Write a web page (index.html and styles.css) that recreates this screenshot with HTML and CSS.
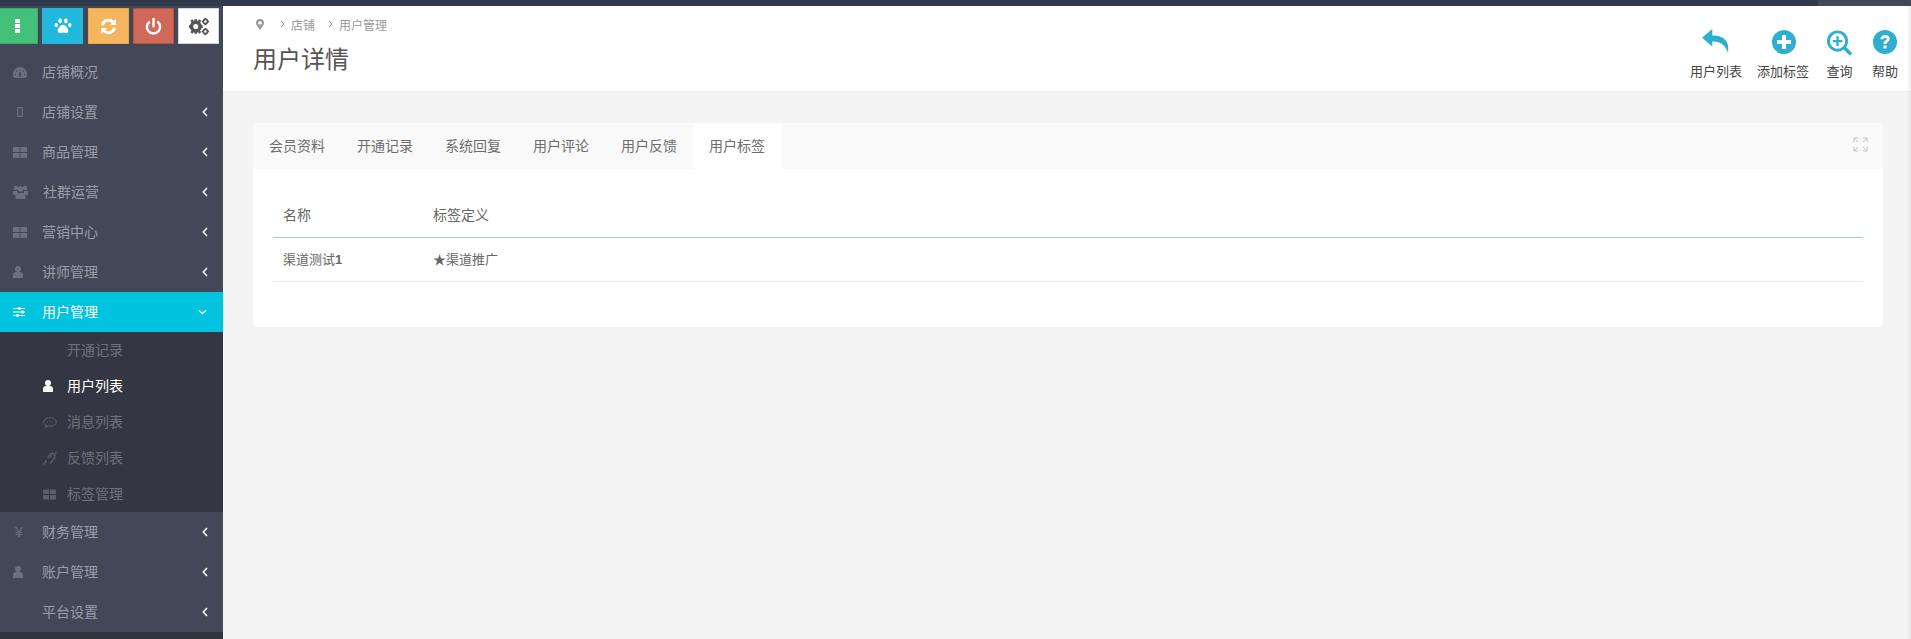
FILE: index.html
```html
<!DOCTYPE html>
<html lang="zh">
<head>
<meta charset="utf-8">
<title>用户详情</title>
<link rel="stylesheet" href="styles.css">
</head>
<body>
<div class="topbar"><div class="topbar-end"></div></div>
<div class="layout">
  <aside class="sidebar">
    <div class="shortcuts">
      <a class="sc sc-green"><svg viewBox="0 0 5 14" width="5" height="14" fill="#fff"><rect width="5" height="4"/><rect y="5" width="5" height="4"/><rect y="10" width="5" height="4"/></svg></a>
      <a class="sc sc-blue"><svg viewBox="0 0 20 18" width="18" height="16" fill="#fff"><ellipse cx="6.800" cy="3.200" rx="2" ry="2.900"/><ellipse cx="13.200" cy="3.200" rx="2" ry="2.900"/><ellipse cx="2.400" cy="8" rx="1.900" ry="2.500"/><ellipse cx="17.600" cy="8" rx="1.900" ry="2.500"/><path d="M10 7.500c3 0 6 4.200 6 7.200 0 2.300-2.500 2.500-3.500 2.200-1-.3-1.700-.6-2.500-.6s-1.500.3-2.500.6c-1 .3-3.500.1-3.500-2.200 0-3 3-7.200 6-7.200z"/></svg></a>
      <a class="sc sc-orange"><svg viewBox="0 0 18 18" width="17" height="17" fill="none" stroke="#fff" stroke-width="3"><path d="M2.500 7.500A6.800 6.800 0 0 1 14 4.500"/><path d="M15.500 10.500A6.800 6.800 0 0 1 4 13.500"/><path d="M16.800 1v6.500h-6.500z" fill="#fff" stroke="none"/><path d="M1.200 17v-6.500h6.500z" fill="#fff" stroke="none"/></svg></a>
      <a class="sc sc-red"><svg viewBox="0 0 18 18" width="17" height="17" fill="none" stroke="#fff" stroke-width="2.600"><path d="M5 3.600a7 7 0 1 0 8 0"/><path d="M9 .8v8" stroke-linecap="round"/></svg></a>
      <a class="sc sc-white"><svg viewBox="0 0 24 20" width="22" height="19" fill="#555"><circle cx="8.500" cy="10" r="4.700" fill="none" stroke="#555" stroke-width="3.800"/><path d="M7 2h3v3H7zM7 15h3v3H7zM1 8.500h3v3H1zM13 8.500h3v3h-3zM2.500 4l2-2 2 2-2 2zM10.500 16l2-2 2 2-2 2zM2.500 16l2-2 2 2-2 2zM10.500 4l2-2 2 2-2 2z"/><circle cx="19" cy="4.500" r="2.300" fill="none" stroke="#555" stroke-width="1.800"/><circle cx="19" cy="15.500" r="2.300" fill="none" stroke="#555" stroke-width="1.800"/><path d="M18 .6h2v1.500h-2zM18 7h2v1.500h-2zM15 3.600h1.500v1.800H15zM21.500 3.600H23v1.800h-1.500zM18 11.600h2v1.500h-2zM18 18h2v1.500h-2zM15 14.600h1.500v1.800H15zM21.500 14.600H23v1.800h-1.500z"/></svg></a>
    </div>
    <nav class="menu">
      <a class="mi"><span class="mi-ic"><svg viewBox="0 0 14 11" width="14" height="11" fill="#6b7080"><path d="M7 0a7 7 0 0 0-7 7c0 1.500.4 2.900 1 4h12c.6-1.100 1-2.500 1-4a7 7 0 0 0-7-7z"/><path d="M6.500 2h1v1.500h-1zM2.800 4l.8-.7 1 1-.8.7zM10.400 3.300l.8.7-1 1-.8-.7zM1.600 7h1.600v1H1.600zM10.800 7h1.600v1h-1.600zM6.300 5h1.400l.5 3.500a1.200 1.200 0 1 1-2.400 0z" fill="#434859"/></svg></span><span class="mi-t">店铺概况</span></a>
      <a class="mi"><span class="mi-ic"><svg class="ic-phone" viewBox="0 0 6 10" width="6" height="10" fill="none" stroke="#6b7080" stroke-width="1.300"><rect x=".7" y=".7" width="4.600" height="8.600"/></svg></span><span class="mi-t">店铺设置</span><svg class="chev" viewBox="0 0 6 10" width="6" height="10"><path d="M5 1L1.300 5 5 9"/></svg></a>
      <a class="mi"><span class="mi-ic"><svg viewBox="0 0 14 11" width="14" height="11" fill="#6b7080"><path d="M0 0h6.500v5H0zM7.500 0H14v5H7.500zM0 6h6.500v5H0zM7.500 6H14v5H7.500z"/></svg></span><span class="mi-t">商品管理</span><svg class="chev" viewBox="0 0 6 10" width="6" height="10"><path d="M5 1L1.300 5 5 9"/></svg></a>
      <a class="mi"><span class="mi-ic"><svg viewBox="0 0 15 14" width="15" height="14" fill="#6b7080"><circle cx="3" cy="3" r="2.200"/><circle cx="12" cy="3" r="2.200"/><circle cx="7.500" cy="4" r="2.700"/><path d="M0 6h4v4H0zM11 6h4v4h-4z"/><path d="M2.500 8h10v6h-10z"/></svg></span><span class="mi-t mi-t1">社群运营</span><svg class="chev" viewBox="0 0 6 10" width="6" height="10"><path d="M5 1L1.300 5 5 9"/></svg></a>
      <a class="mi"><span class="mi-ic"><svg viewBox="0 0 14 11" width="14" height="11" fill="#6b7080"><path d="M0 0h6.500v5H0zM7.500 0H14v5H7.500zM0 6h6.500v5H0zM7.500 6H14v5H7.500z"/></svg></span><span class="mi-t">营销中心</span><svg class="chev" viewBox="0 0 6 10" width="6" height="10"><path d="M5 1L1.300 5 5 9"/></svg></a>
      <a class="mi"><span class="mi-ic"><svg viewBox="0 0 10 12" width="10" height="12" fill="#6b7080"><circle cx="5" cy="3" r="3"/><path d="M0 12V8.500C0 7 1.500 6 3 6h4c1.500 0 3 1 3 2.500V12z"/></svg></span><span class="mi-t">讲师管理</span><svg class="chev" viewBox="0 0 6 10" width="6" height="10"><path d="M5 1L1.300 5 5 9"/></svg></a>
      <a class="mi mi-active"><span class="mi-ic"><svg viewBox="0 0 12 10" width="12" height="10" fill="#fff"><path d="M0 1h12v1H0zM0 4.500h12v1H0zM0 8h12v1H0z"/><path d="M5.500 0h2v3h-2zM8.500 3.500h2v3h-2zM3.500 7h2v3h-2z"/></svg></span><span class="mi-t">用户管理</span><svg class="chev chev-down" viewBox="0 0 10 6" width="9" height="6"><path d="M1 1l4 3.700L9 1"/></svg></a>
      <div class="sub">
        <a class="si"><span class="si-ic"></span><span class="si-t">开通记录</span></a>
        <a class="si si-active"><span class="si-ic"><svg viewBox="0 0 10 12" width="10" height="12" fill="#fff"><circle cx="5" cy="3" r="3"/><path d="M0 12V8.500C0 7 1.500 6 3 6h4c1.500 0 3 1 3 2.500V12z"/></svg></span><span class="si-t">用户列表</span></a>
        <a class="si"><span class="si-ic"><svg viewBox="0 0 14 11" width="14" height="11" fill="none" stroke="#5b5f6b"><ellipse cx="7" cy="5" rx="6.300" ry="4.300"/><path d="M3 8.500L2 10.500l3-1.500"/><path d="M4 5h1M6.500 5h1M9 5h1"/></svg></span><span class="si-t">消息列表</span></a>
        <a class="si"><span class="si-ic"><svg viewBox="0 0 14 13" width="14" height="13" fill="none" stroke="#5b5f6b" stroke-width="1.300"><path d="M5 6.500c0-3 2-5 4-5s3 1.500 3 3c0 2-2 2.300-2.500 4-.4 1.500-1.200 2.500-2.500 2.500"/><path d="M7 6c0-1.500 1-2.500 2-2.500"/><path d="M.5 12.500l3-3M12 1.500L13.500 0"/><path d="M3 8c-1 1-1 1.500-.5 2.500"/></svg></span><span class="si-t">反馈列表</span></a>
        <a class="si"><span class="si-ic"><svg viewBox="0 0 14 11" width="13" height="11" fill="#5b5f6b"><path d="M0 0h6.500v5H0zM7.500 0H14v5H7.500zM0 6h6.500v5H0zM7.500 6H14v5H7.500z"/></svg></span><span class="si-t">标签管理</span></a>
      </div>
      <a class="mi"><span class="mi-ic mi-yen">¥</span><span class="mi-t">财务管理</span><svg class="chev" viewBox="0 0 6 10" width="6" height="10"><path d="M5 1L1.300 5 5 9"/></svg></a>
      <a class="mi"><span class="mi-ic"><svg viewBox="0 0 10 12" width="10" height="12" fill="#6b7080"><circle cx="5" cy="3" r="3"/><path d="M0 12V8.500C0 7 1.500 6 3 6h4c1.500 0 3 1 3 2.500V12z"/></svg></span><span class="mi-t">账户管理</span><svg class="chev" viewBox="0 0 6 10" width="6" height="10"><path d="M5 1L1.300 5 5 9"/></svg></a>
      <a class="mi"><span class="mi-ic"></span><span class="mi-t">平台设置</span><svg class="chev" viewBox="0 0 6 10" width="6" height="10"><path d="M5 1L1.300 5 5 9"/></svg></a>
    </nav>
  </aside>
  <main class="main">
    <header class="pagehead">
      <div class="headleft">
        <div class="crumbs">
          <svg class="pin" viewBox="0 0 8 11" width="8" height="11" fill="#999"><path fill-rule="evenodd" d="M4 0a4 4 0 0 0-4 4c0 2 2.500 5 4 7 1.500-2 4-5 4-7a4 4 0 0 0-4-4zm0 2.200a1.800 1.800 0 1 1 0 3.600 1.800 1.800 0 0 1 0-3.600z"/></svg>
          <svg class="sep" viewBox="0 0 5 8" width="5" height="8"><path d="M1 1l3 3-3 3"/></svg><span>店铺</span><svg class="sep sep2" viewBox="0 0 5 8" width="5" height="8"><path d="M1 1l3 3-3 3"/></svg><span>用户管理</span>
        </div>
        <h1 class="title">用户详情</h1>
      </div>
      <div class="actions">
        <a class="act act-1"><svg viewBox="0 0 30 28" width="30" height="26" fill="#2eaed0"><path d="M11 1L0 10.500 11 20v-5.500c7 0 13 2 17 12 1.500-10-2-18.500-17-18.500z"/></svg><span>用户列表</span></a>
        <a class="act act-2"><svg viewBox="0 0 24 24" width="24" height="24"><circle cx="12" cy="12" r="12" fill="#2eaed0"/><path d="M10 5h4v5h5v4h-5v5h-4v-5H5v-4h5z" fill="#fff"/></svg><span>添加标签</span></a>
        <a class="act act-3"><svg viewBox="0 0 27 27" width="27" height="26"><circle cx="11.500" cy="11.500" r="9.500" fill="none" stroke="#2eaed0" stroke-width="3"/><path d="M10.300 6.500h2.400v3.800h3.800v2.400h-3.800v3.800h-2.400v-3.800H6.500v-2.400h3.800z" fill="#2eaed0"/><path d="M18.500 18.500l7 7" stroke="#2eaed0" stroke-width="3.600"/></svg><span>查询</span></a>
        <a class="act act-4"><svg viewBox="0 0 24 24" width="24" height="24"><circle cx="12" cy="12" r="12" fill="#2eaed0"/><path d="M7.500 9.200C7.700 6.600 9.600 5 12.200 5c2.700 0 4.500 1.600 4.500 3.800 0 1.900-1.100 2.700-2.200 3.500-.8.600-1 .9-1 1.700h-3c0-1.700.5-2.500 1.800-3.400.9-.7 1.400-1 1.400-1.700 0-.7-.6-1.200-1.500-1.200-1 0-1.600.6-1.700 1.500zM10.500 15.500h3v3h-3z" fill="#fff"/></svg><span>帮助</span></a>
      </div>
    </header>
    <section class="card">
      <div class="tabs">
        <a class="tab">会员资料</a>
        <a class="tab">开通记录</a>
        <a class="tab">系统回复</a>
        <a class="tab">用户评论</a>
        <a class="tab">用户反馈</a>
        <a class="tab tab-on">用户标签</a>
        <svg class="expand" viewBox="0 0 15 15" width="15" height="15" fill="none" stroke="#c4c4c4" stroke-width="1"><path d="M1 5V1h4M1 1l4 4M14 5V1h-4M14 1l-4 4M1 10v4h4M1 14l4-4M14 10v4h-4M14 14l-4-4"/></svg>
      </div>
      <div class="tabbody">
        <table class="tbl">
          <thead><tr><th class="c1">名称</th><th>标签定义</th></tr></thead>
          <tbody><tr><td class="c1">渠道测试<b>1</b></td><td>★渠道推广</td></tr></tbody>
        </table>
      </div>
    </section>
  </main>
</div>
</body>
</html>
```
FILE: styles.css
```css
* { box-sizing: border-box; }
html, body { margin: 0; padding: 0; height: 100%; overflow: hidden; }
body { font-family: "Noto Sans CJK SC", "Liberation Sans", sans-serif; font-size: 14px; color: #666; background: #f4f4f4; }
a { display: flex; text-decoration: none; }
.topbar { height: 6px; background: #2f3a4c; display: flex; justify-content: flex-end; }
.topbar-end { width: 93px; background: #434859; }
.layout { display: flex; height: 633px; }
.sidebar { width: 223px; flex: none; background: #2f3441; display: flex; flex-direction: column; }
.shortcuts { height: 46px; padding: 2px 0 0 0; background: #434859; display: flex; gap: 4px; }
.sc { width: 41px; height: 36px; align-items: center; justify-content: center; border: 1px solid; }
.sc-green { width: 38px; background: #43c07a; border-color: #3aa96b; border-left: 0; }
.sc-green svg { margin-right: 3px; }
.sc-blue { background: #22b7dc; border-color: #22b7dc; }
.sc-orange { margin-left: 1px; background: #f6b65f; border-color: #eda843; }
.sc-red { background: #d1695b; border-color: #b9523f; }
.sc-white { background: #fff; border-color: #d5d5dc; }
.menu { display: flex; flex-direction: column; flex: none; }
.mi { height: 40px; background: #434859; align-items: center; color: #9a9da6; position: relative; padding-left: 12px; }
.mi-ic { width: 30px; display: flex; justify-content: flex-start; align-items: center; }
.mi-ic svg { margin-left: 1px; }
.mi-ic .ic-phone { margin-left: 5px; }
.mi-t { width: 60px; line-height: 20px; padding-bottom: 2px; height: 22px; }
.mi-t1 { margin-left: 1px; }
.chev { position: absolute; right: 15px; top: 15px; fill: none; stroke: #fff; stroke-width: 1.500; }
.chev-down { right: 16px; top: 17px; }
.mi-active { background: #00c3e0; color: #fff; }
.mi-yen { font-size: 14px; color: #6b7080; padding-left: 3px; font-family: "Liberation Sans", sans-serif; }
.sub { background: #343743; display: flex; flex-direction: column; height: 180px; }
.si { height: 36px; align-items: center; color: #6e717b; padding-left: 43px; }
.si-active { color: #fff; }
.si-ic { width: 24px; display: flex; align-items: center; }
.si-t { line-height: 20px; padding-bottom: 2px; height: 22px; }
.main { flex: 1; min-width: 0; display: flex; flex-direction: column; position: relative; }
.main::after { content: ""; position: absolute; top: 0; right: 0; bottom: 0; width: 4px; background: linear-gradient(to right, rgba(0,0,0,0), rgba(0,0,0,.07)); }
.pagehead { height: 86px; flex: none; background: #fff; border-bottom: 1px solid #eee; display: flex; justify-content: space-between; padding-left: 30px; padding-right: 13px; }
.crumbs { display: flex; align-items: center; height: 16px; margin-top: 10px; font-size: 12px; color: #999; }
.pin { margin-left: 3px; }
.sep { fill: none; stroke: #999; margin: 0 6px 0 16px; }
.sep2 { margin-left: 13px; }
.title { margin: 10px 0 0; font-size: 24px; font-weight: 400; line-height: 32px; color: #555; }
.actions { display: flex; align-items: flex-start; padding-top: 22px; }
.act { flex-direction: column; align-items: center; font-size: 13px; color: #444; }
.act span { line-height: 16px; margin-top: 9px; white-space: nowrap; }
.act-2 { margin-left: 15px; }
.act-2 svg, .act-3 svg, .act-4 svg { margin-top: 2px; }
.act-2 svg { margin-left: 2px; }
.act-3 { margin-left: 17px; }
.act-3 span { margin-top: 7px; }
.act-4 { margin-left: 19px; }
.card { margin: 31px 28px 0 30px; background: #fff; border-radius: 4px; height: 204px; overflow: hidden; flex: none; }
.tabs { height: 46px; background: #f9f9f9; display: flex; position: relative; }
.tab { padding: 0 16px 2px; height: 46px; align-items: center; color: #6d6d6d; white-space: nowrap; }
.tab-on { background: #fff; }
.expand { position: absolute; right: 15px; top: 14px; }
.tabbody { padding: 23px 20px 0 20px; }
.tbl { width: 100%; border-collapse: collapse; color: #666; font-size: 13px; }
.tbl th { font-size: 14px; font-weight: 400; text-align: left; height: 45px; border-bottom: 1px solid #8ed4ea; padding: 0 10px; }
.tbl td { height: 44px; border-bottom: 1px solid #e8e8e8; padding: 0 10px 2px; }
.c1 { width: 150px; }
.tbl b { font-family: "Liberation Sans", sans-serif; }
```
